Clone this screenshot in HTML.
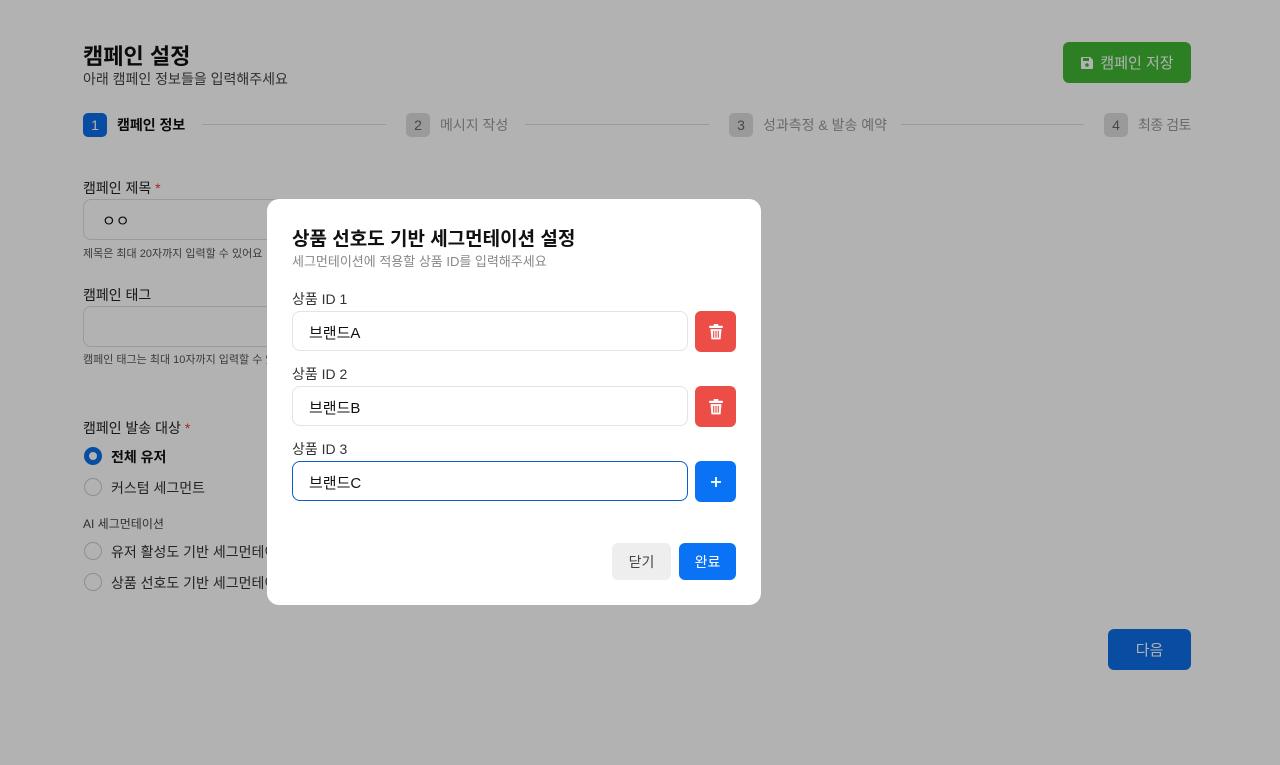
<!DOCTYPE html>
<html><head><meta charset="utf-8"><style>
*{box-sizing:border-box;margin:0;padding:0}
body{width:1280px;height:765px;position:relative;overflow:hidden;background:#fff;font-family:"Liberation Sans","Noto Sans CJK KR",sans-serif;color:#111}
.abs{position:absolute}
.ov{position:absolute;inset:0;background:rgba(0,0,0,0.3)}
.step{position:absolute;top:113px;display:flex;align-items:center;font-size:14px;color:#999}
.num{width:24px;height:24px;border-radius:5px;background:#ddd;color:#666;display:flex;align-items:center;justify-content:center;font-size:14px;margin-right:10px}
.line{position:absolute;top:124px;height:1px;background:#ddd}
.lbl{font-size:14px;color:#222}
.help{font-size:11px;color:#555}
.inp{position:absolute;border:1px solid #ddd;border-radius:8px;background:#fff}
.radio{position:absolute;width:18px;height:18px;border-radius:50%;border:1.5px solid #ccc;background:#fff}
.rt{position:absolute;font-size:14px;color:#333}
.modal{position:absolute;left:267px;top:199px;width:494px;height:406px;background:#fff;border-radius:12px}
.mi{position:absolute;left:25px;width:396px;height:40px;border:1px solid #e3e3e3;border-radius:8px;font-size:15px;padding:10px 16px;color:#111}
.ml{position:absolute;left:25px;font-size:14px;color:#333}
.bt{position:absolute;left:428px;width:41px;height:41px;border-radius:6px;display:flex;align-items:center;justify-content:center}
</style></head><body>
<div class="abs" style="left:83px;top:39px;font-size:22px;font-weight:bold">캠페인 설정</div>
<div class="abs" style="left:83px;top:69px;font-size:14px;color:#444">아래 캠페인 정보들을 입력해주세요</div>
<div class="abs" style="left:1063px;top:42px;width:128px;height:41px;background:#40b833;border-radius:6px;color:#fff;font-size:15px;display:flex;align-items:center;justify-content:center;gap:6px">
<svg width="14" height="14" viewBox="0 0 14 14"><path d="M1 2a1 1 0 0 1 1-1h8l3 3v8a1 1 0 0 1-1 1H2a1 1 0 0 1-1-1z" fill="#fff"/><rect x="3" y="2" width="6" height="3" fill="#40b833"/><circle cx="7" cy="9" r="1.8" fill="#40b833"/></svg>캠페인 저장</div>
<div class="step" style="left:83px;color:#111;font-weight:bold"><div class="num" style="background:#0e6fe8;color:#fff;font-weight:normal">1</div>캠페인 정보</div>
<div class="line" style="left:202px;width:184px"></div>
<div class="step" style="left:406px"><div class="num">2</div>메시지 작성</div>
<div class="line" style="left:525px;width:184px"></div>
<div class="step" style="left:729px"><div class="num">3</div>성과측정 &amp; 발송 예약</div>
<div class="line" style="left:901px;width:183px"></div>
<div class="step" style="left:1104px;letter-spacing:-0.5px"><div class="num" style="letter-spacing:0">4</div>최종 검토</div>
<div class="abs lbl" style="left:83px;top:178px">캠페인 제목<span style="color:#e33"> *</span></div>
<div class="inp" style="left:83px;top:199px;width:300px;height:41px;padding:10px 18px;font-size:15px">ㅇㅇ</div>
<div class="abs help" style="left:83px;top:245px">제목은 최대 20자까지 입력할 수 있어요</div>
<div class="abs lbl" style="left:83px;top:285px">캠페인 태그</div>
<div class="inp" style="left:83px;top:306px;width:300px;height:41px"></div>
<div class="abs help" style="left:83px;top:351px">캠페인 태그는 최대 10자까지 입력할 수 있어요</div>
<div class="abs lbl" style="left:83px;top:418px">캠페인 발송 대상<span style="color:#e33"> *</span></div>
<div class="radio" style="left:84px;top:447px;border:5px solid #0e6fe8"></div><div class="rt" style="left:111px;top:447px;font-weight:bold;color:#111">전체 유저</div>
<div class="radio" style="left:84px;top:478px"></div><div class="rt" style="left:111px;top:478px">커스텀 세그먼트</div>
<div class="abs" style="left:83px;top:515px;font-size:12px;color:#444">AI 세그먼테이션</div>
<div class="radio" style="left:84px;top:542px"></div><div class="rt" style="left:111px;top:542px">유저 활성도 기반 세그먼테이션</div>
<div class="radio" style="left:84px;top:573px"></div><div class="rt" style="left:111px;top:573px">상품 선호도 기반 세그먼테이션</div>
<div class="abs" style="left:1108px;top:629px;width:83px;height:41px;background:#0e6fe8;border-radius:6px;color:#fff;font-size:15px;display:flex;align-items:center;justify-content:center">다음</div>
<div class="ov"></div>
<div class="modal">
<div class="abs" style="left:25px;top:25px;font-size:19px;font-weight:bold">상품 선호도 기반 세그먼테이션 설정</div>
<div class="abs" style="left:25px;top:52px;font-size:13px;color:#888">세그먼테이션에 적용할 상품 ID를 입력해주세요</div>
<div class="ml" style="top:90px">상품 ID 1</div>
<div class="mi" style="top:112px">브랜드A</div>
<div class="bt" style="top:112px;background:#ec4d46"><svg width="14" height="16" viewBox="0 0 12 14"><rect x="0" y="1.5" width="12" height="2" rx=".5" fill="#fff"/><rect x="4" y="0" width="4" height="2" fill="#fff"/><path d="M1.2 4.5h9.6l-.8 9H2z" fill="#fff"/><path d="M4 6v6M6 6v6M8 6v6" stroke="#ec4d46" stroke-width="1"/></svg></div>
<div class="ml" style="top:165px">상품 ID 2</div>
<div class="mi" style="top:187px">브랜드B</div>
<div class="bt" style="top:187px;background:#ec4d46"><svg width="14" height="16" viewBox="0 0 12 14"><rect x="0" y="1.5" width="12" height="2" rx=".5" fill="#fff"/><rect x="4" y="0" width="4" height="2" fill="#fff"/><path d="M1.2 4.5h9.6l-.8 9H2z" fill="#fff"/><path d="M4 6v6M6 6v6M8 6v6" stroke="#ec4d46" stroke-width="1"/></svg></div>
<div class="ml" style="top:240px">상품 ID 3</div>
<div class="mi" style="top:262px;border:1.5px solid #0a5fc7">브랜드C</div>
<div class="bt" style="top:262px;background:#0a72f5"><svg width="12" height="12" viewBox="0 0 12 12"><path d="M6 1v10M1 6h10" stroke="#fff" stroke-width="1.8"/></svg></div>
<div class="abs" style="left:345px;top:344px;width:59px;height:37px;background:#eee;border-radius:6px;font-size:14px;color:#444;display:flex;align-items:center;justify-content:center">닫기</div>
<div class="abs" style="left:412px;top:344px;width:57px;height:37px;background:#0a72f5;border-radius:6px;font-size:14px;color:#fff;display:flex;align-items:center;justify-content:center">완료</div>
</div>
</body></html>
